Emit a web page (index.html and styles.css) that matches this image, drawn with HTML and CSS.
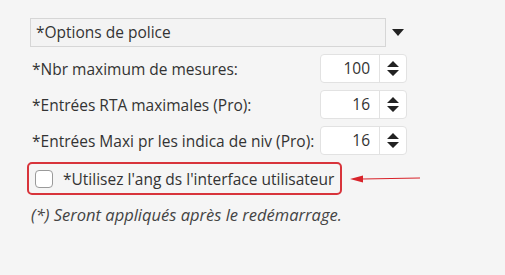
FILE: index.html
```html
<!DOCTYPE html>
<html lang="fr">
<head>
    <meta charset="UTF-8">
    <title>Options</title>
    <link rel="stylesheet" href="styles.css">
</head>
<body>

<div class="panel">
    <!-- Font options -->
    <div class="select-row">
        <div class="select-box">*Options de police</div>
        <svg class="drop" width="12" height="7" viewBox="0 0 12 7"><path d="M0 0H12L6 7Z" fill="#222"/></svg>
    </div>

    <!-- Numeric fields -->
    <div class="field">
        <span class="label">*Nbr maximum de mesures:</span>
        <div class="spin">
            <span class="value">100</span>
            <span class="arrows">
                <svg width="12" height="16" viewBox="0 0 12 16"><path d="M6 0L12 6H0Z M0 9H12L6 15Z" fill="#222"/></svg>
            </span>
        </div>
    </div>
    <div class="field">
        <span class="label">*Entrées RTA maximales (Pro):</span>
        <div class="spin">
            <span class="value">16</span>
            <span class="arrows">
                <svg width="12" height="16" viewBox="0 0 12 16"><path d="M6 0L12 6H0Z M0 9H12L6 15Z" fill="#222"/></svg>
            </span>
        </div>
    </div>
    <div class="field">
        <span class="label">*Entrées Maxi pr les indica de niv (Pro):</span>
        <div class="spin">
            <span class="value">16</span>
            <span class="arrows">
                <svg width="12" height="16" viewBox="0 0 12 16"><path d="M6 0L12 6H0Z M0 9H12L6 15Z" fill="#222"/></svg>
            </span>
        </div>
    </div>

    <!-- Highlighted checkbox -->
    <div class="check-row">
        <label class="check-box">
            <span class="box"></span>
            <span>*Utilisez l'ang ds l'interface utilisateur</span>
        </label>
        <svg class="pointer" width="72" height="10" viewBox="0 0 72 10"><path d="M12 4.4L70 3.4V4.6L12 5.6Z" fill="#d8232a"/><path d="M0 5L13 1.5V8.5Z" fill="#d8232a"/></svg>
    </div>

    <p class="note">(*) Seront appliqués après le redémarrage.</p>
</div>

</body>
</html>
```

FILE: styles.css
```css
body {
    margin: 0;
    background-color: #f5f5f5;
    font-family: "Open Sans", "Noto Sans", sans-serif;
    font-size: 15.5px;
    color: #333;
}
.panel {
    padding: 18px 0 0 30px;
}
.select-row {
    display: flex;
    align-items: center;
}
.select-box {
    width: 349px;
    height: 27px;
    line-height: 27px;
    padding-left: 5px;
    border: 1px solid #d6d6d6;
    background-color: #f3f3f3;
}
.drop {
    margin-left: 6px;
}
.field {
    display: flex;
    justify-content: space-between;
    align-items: center;
    width: 377px;
    margin-top: 7px;
}
.label {
    padding-left: 2px;
}
.spin {
    display: flex;
    width: 85px;
    height: 27px;
    border: 1px solid #e2e2e2;
    border-radius: 4px;
    background-color: #fff;
}
.value {
    width: 49px;
    padding-right: 9px;
    text-align: right;
    line-height: 27px;
    border-right: 1px solid #e2e2e2;
}
.arrows {
    flex: 1;
    display: flex;
    align-items: center;
    justify-content: center;
}
.check-row {
    display: flex;
    align-items: center;
    margin-top: 7px;
    margin-left: -3px;
}
.check-box {
    display: flex;
    align-items: center;
    width: 311px;
    height: 29px;
    border: 2px solid #d8343b;
    border-radius: 5px;
}
.box {
    width: 16px;
    height: 16px;
    margin: 0 10px 0 6px;
    border: 1px solid #9a9a9a;
    border-radius: 4px;
    background-color: #fff;
}
.pointer {
    margin-left: 8px;
}
.note {
    margin: 8px 0 0 1px;
    font-size: 16.5px;
    font-style: italic;
    color: #444;
}
```
